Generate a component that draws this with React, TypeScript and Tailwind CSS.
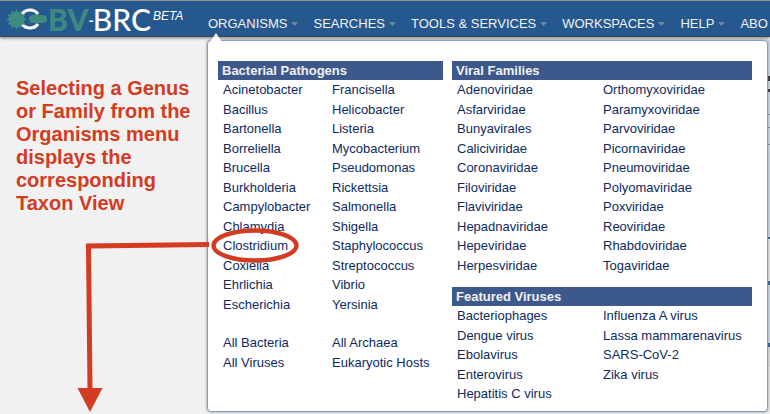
import React from "react";

const menus = ["ORGANISMS", "SEARCHES", "TOOLS & SERVICES", "WORKSPACES", "HELP"];

const bacteria = [
  ["Acinetobacter", "Francisella"],
  ["Bacillus", "Helicobacter"],
  ["Bartonella", "Listeria"],
  ["Borreliella", "Mycobacterium"],
  ["Brucella", "Pseudomonas"],
  ["Burkholderia", "Rickettsia"],
  ["Campylobacter", "Salmonella"],
  ["Chlamydia", "Shigella"],
  ["Clostridium", "Staphylococcus"],
  ["Coxiella", "Streptococcus"],
  ["Ehrlichia", "Vibrio"],
  ["Escherichia", "Yersinia"],
];

const groups = [
  ["All Bacteria", "All Archaea"],
  ["All Viruses", "Eukaryotic Hosts"],
];

const families = [
  ["Adenoviridae", "Orthomyxoviridae"],
  ["Asfarviridae", "Paramyxoviridae"],
  ["Bunyavirales", "Parvoviridae"],
  ["Caliciviridae", "Picornaviridae"],
  ["Coronaviridae", "Pneumoviridae"],
  ["Filoviridae", "Polyomaviridae"],
  ["Flaviviridae", "Poxviridae"],
  ["Hepadnaviridae", "Reoviridae"],
  ["Hepeviridae", "Rhabdoviridae"],
  ["Herpesviridae", "Togaviridae"],
];

const featured = [
  ["Bacteriophages", "Influenza A virus"],
  ["Dengue virus", "Lassa mammarenavirus"],
  ["Ebolavirus", "SARS-CoV-2"],
  ["Enterovirus", "Zika virus"],
  ["Hepatitis C virus", ""],
];

function Heading({ children }: { children: React.ReactNode }) {
  return (
    <h2 className="h-[19px] bg-[#3d598b] pl-1 text-[13px] leading-[19px] font-bold text-[#f0f0f0]">
      {children}
    </h2>
  );
}

function Links({ rows, cols }: { rows: string[][]; cols: string }) {
  return (
    <ul className="pl-[5px] text-[13px] leading-normal">
      {rows.map(([a, b]) => (
        <li key={a} className={`grid ${cols}`}>
          <span>
            {a === "Clostridium" ? (
              <a href="#clostridium" className="relative">
                {a}
                <svg
                  className="pointer-events-none absolute -top-[10px] -left-[12px] h-[35px] w-[88px] max-w-none"
                  viewBox="0 0 88 35"
                  aria-hidden="true"
                >
                  <ellipse cx="44" cy="17.5" rx="41.5" ry="15" fill="none" stroke="#d33b22" strokeWidth="4.4" />
                </svg>
              </a>
            ) : (
              <a href={`#${a}`}>{a}</a>
            )}
          </span>
          {b && <span><a href={`#${b}`}>{b}</a></span>}
        </li>
      ))}
    </ul>
  );
}

const spikes = Array.from({ length: 12 }, (_, i) => i * 30);

function Logo() {
  return (
    <a href="#home" className="flex h-9 w-[200px] shrink-0 items-start pl-[6px] text-white">
      <svg className="mt-[6px] h-6 w-[41px] shrink-0" viewBox="0 0 41 24" aria-hidden="true">
        <path d="M16 7A10 10 0 0 1 32 7M16 17A10 10 0 0 0 32 17" fill="none" stroke="#fff" strokeWidth="3" />
        <circle cx="10.5" cy="12.5" r="7.5" fill="#3f8a80" />
        {spikes.map((angle) => (
          <path key={angle} d="M8.5 6L10.5 2L12.5 6z" fill="#3f8a80" transform={`rotate(${angle} 10.5 12.5)`} />
        ))}
        <rect x="23" y="8" width="18" height="8" rx="4" fill="#3f8a80" />
      </svg>
      <span className="flex pl-px font-['Lato'] text-[30px] leading-[37px]">
        <span className="font-black text-[#3f8a80]">BV</span>
        <span className="text-sm leading-[37px] font-black">-</span>
        <span className="-ml-px font-medium">BRC</span>
      </span>
      <span className="pt-2 pl-[2px] text-xs leading-[14px] italic">BETA</span>
    </a>
  );
}

export default function App() {
  return (
    <div className="flex min-h-screen flex-col overflow-hidden bg-[#f1f1f1] font-['Liberation_Sans',Arial,sans-serif] text-[#0d2a60]">
      <header className="flex h-[37px] items-start border-t border-b border-t-[#909498] border-b-[#3c4656] bg-[#25588f] shadow-[0_1px_3px_#777]">
        <Logo />
        <nav className="flex pt-[15px] pl-2 text-[13px] leading-[15px] whitespace-nowrap text-[#f2f2f2]">
          {menus.map((label) => (
            <button key={label} type="button" className="mr-[15px] flex items-center gap-1">
              {label}
              <svg className="h-1 w-[7px]" viewBox="0 0 7 4" aria-hidden="true">
                <path d="M0 0h7L3.5 4z" fill="#73869b" />
              </svg>
            </button>
          ))}
          <button type="button">ABO</button>
        </nav>
      </header>

      <main className="flex flex-1 pt-[3px]">
        <aside className="w-[207px] shrink-0">
          <p className="pt-[37px] pl-4 text-xl leading-[23px] font-bold whitespace-nowrap text-[#d33b22]">
            Selecting a Genus<br />or Family from the<br />Organisms menu<br />displays the<br />corresponding<br />Taxon View
          </p>
          <svg className="relative z-10 mt-[24px] h-[174px] w-[209px] max-w-none" viewBox="0 0 209 174" aria-hidden="true">
            <path d="M209 5.5L88.5 7L90 150" fill="none" stroke="#d33b22" strokeWidth="5" />
            <path d="M77.5 149h25L90 173z" fill="#d33b22" />
          </svg>
        </aside>

        <section className="relative flex flex-1 gap-[9px] self-start rounded border border-[#7f9fc4] bg-white pt-5 pr-[15px] pb-[7px] pl-[10px] shadow-[0_0_3px_#888]">
          <svg className="absolute -top-[8px] left-[2px] h-[9px] w-3" viewBox="0 0 12 9" aria-hidden="true">
            <path d="M0 9L6 0L12 9z" fill="#fff" />
          </svg>
          <div className="flex-[225]">
            <Heading>Bacterial Pathogens</Heading>
            <Links rows={bacteria} cols="grid-cols-[109px_1fr]" />
            <div className="pt-[19px]">
              <Links rows={groups} cols="grid-cols-[109px_1fr]" />
            </div>
          </div>
          <div className="flex-[300]">
            <Heading>Viral Families</Heading>
            <Links rows={families} cols="grid-cols-[146px_1fr]" />
            <div className="pt-3">
              <Heading>Featured Viruses</Heading>
              <Links rows={featured} cols="grid-cols-[146px_1fr]" />
            </div>
          </div>
        </section>

        <div className="w-[2px] shrink-0">
          <div className="h-[199px] border-b-2 border-[#25588f] bg-[#d5deea] pt-[36px]">
            <div className="h-[5px] w-[2px] bg-[#222]" />
            <div className="mt-[8px] h-[3px] w-[2px] bg-[#222]" />
            <div className="mt-[22px] h-px bg-[#8a929c]" />
            <div className="mt-[12px] h-px bg-[#8a929c]" />
            <div className="mt-[16px] h-px bg-[#8a929c]" />
          </div>
          <div className="h-[42px]" />
          <div className="h-[66px] border-y-4 border-[#25588f] bg-[#d5deea]" />
          <div className="h-5 bg-[#e4e4e4]" />
        </div>
      </main>
    </div>
  );
}
